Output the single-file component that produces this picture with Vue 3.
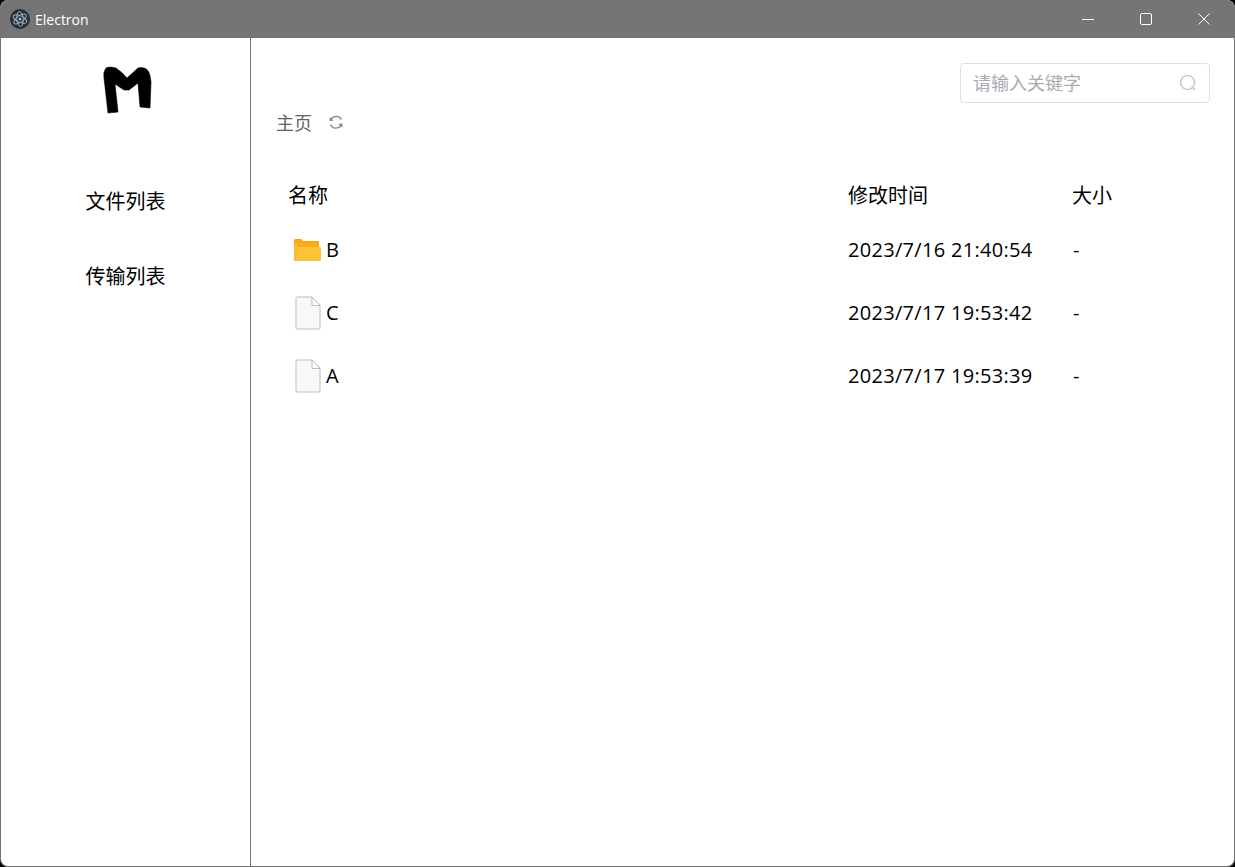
<template>
    <div class="window">
        <!-- title bar -->
        <header class="title-bar">
            <div class="title-left">
                <svg class="app-icon" width="20" height="20" viewBox="0 0 20 20">
                    <circle cx="10" cy="10" r="10" fill="#2b2e3b" />
                    <g fill="none" stroke="#9dbcc8" stroke-width="0.9">
                        <ellipse cx="10" cy="10" rx="7.400" ry="3.200" transform="rotate(25 10 10)" />
                        <ellipse cx="10" cy="10" rx="7.400" ry="3.200" transform="rotate(85 10 10)" />
                        <ellipse cx="10" cy="10" rx="7.400" ry="3.200" transform="rotate(145 10 10)" />
                    </g>
                    <circle cx="10" cy="10" r="1.200" fill="#c4d8df" />
                </svg>
                <span class="app-name">Electron</span>
            </div>
            <div class="win-controls">
                <button class="win-btn" type="button">
                    <svg width="12" height="12" viewBox="0 0 12 12"><path d="M0 6.500h12" stroke="#fff" fill="none" /></svg>
                </button>
                <button class="win-btn" type="button">
                    <svg width="12" height="12" viewBox="0 0 12 12"><rect x="0.5" y="0.5" width="11" height="11" rx="1.500" stroke="#fff" fill="none" /></svg>
                </button>
                <button class="win-btn" type="button">
                    <svg width="12" height="12" viewBox="0 0 12 12"><path d="M0.500 0.500l11 11M11.500 0.500l-11 11" stroke="#fff" fill="none" /></svg>
                </button>
            </div>
        </header>

        <div class="body">
            <!-- sidebar -->
            <aside class="sidebar">
                <svg class="logo" width="50" height="48" viewBox="0 0 50 48">
                    <path d="M6 47L16 46L13 18L22 24L27 24L36 17L38 41L48 42L49 16Q48 3 42 2Q38 1 36 2L25 12Q20 6 14 2Q7 0 4 2Q1 6 2 12Z" fill="#000" stroke="#000" stroke-width="0.6" stroke-linejoin="round" />
                </svg>
                <nav class="nav">
                    <a v-for="item in navItems" :key="item" class="nav-item">{{ item }}</a>
                </nav>
            </aside>

            <!-- main -->
            <main class="main">
                <div class="search-row">
                    <div class="search">
                        <span class="placeholder">请输入关键字</span>
                        <svg width="18" height="18" viewBox="0 0 18 18" fill="none" stroke="#b9bbc0" stroke-width="1.200">
                            <circle cx="8.500" cy="8.500" r="7" />
                            <path d="M13.500 13.500L16 16" />
                        </svg>
                    </div>
                </div>

                <div class="crumb">
                    <span>主页</span>
                    <svg width="16" height="16" viewBox="0 0 16 16">
                        <g fill="none" stroke="#8a8a8a" stroke-width="1.400">
                            <path d="M3 5.500A6 6 0 0 1 13.500 5.500" />
                            <path d="M2.500 10.500A6 6 0 0 0 13 11.500" />
                        </g>
                        <path d="M1.500 3L1.500 7.200L5.800 6.600Z" fill="#8a8a8a" />
                        <path d="M14.500 13.700L14.500 9.500L10.200 10.100Z" fill="#8a8a8a" />
                    </svg>
                </div>

                <div class="table">
                    <div class="row head">
                        <div class="name-head">名称</div>
                        <div>修改时间</div>
                        <div>大小</div>
                    </div>
                    <div v-for="file in files" :key="file.name" class="row">
                        <div class="name-cell">
                            <span class="file-icon">
                                <svg v-if="file.folder" width="28" height="24" viewBox="0 0 28 24">
                                    <path d="M1 2Q1 1 2 1H8.500L10 3H25Q26 3 26 4V9H1Z" fill="#f5a81f" />
                                    <path d="M1 5H26V9H4V23H2Q1 23 1 22Z" fill="#fbbb3a" />
                                    <path d="M1 5H26V9H4V5Z" fill="#f7ab20" />
                                    <path d="M4 9H27Q28 9 28 10V22Q28 23 27 23H4Z" fill="#ffc233" />
                                </svg>
                                <svg v-else class="doc" width="26" height="34" viewBox="0 0 26 34">
                                    <path d="M2 1H17L25 9.500V32Q25 33 24 33H2Q1 33 1 32V2Q1 1 2 1Z" fill="#f8f8f8" stroke="#bdbdbd" />
                                    <path d="M17 1V9.500H25Z" fill="#fff" stroke="#bdbdbd" />
                                </svg>
                            </span>
                            <span>{{ file.name }}</span>
                        </div>
                        <div class="time-cell">{{ file.time }}</div>
                        <div class="size-cell">{{ file.size }}</div>
                    </div>
                </div>
            </main>
        </div>
    </div>
</template>

<script setup>
const navItems = ['文件列表', '传输列表']

const files = [
    { name: 'B', time: '2023/7/16 21:40:54', size: '-', folder: true },
    { name: 'C', time: '2023/7/17 19:53:42', size: '-', folder: false },
    { name: 'A', time: '2023/7/17 19:53:39', size: '-', folder: false },
]
</script>

<style>
html,
body {
    margin: 0;
    background: #000;
}
</style>

<style scoped>
.window {
    box-sizing: border-box;
    width: 1235px;
    height: 867px;
    display: flex;
    flex-direction: column;
    overflow: hidden;
    background: #fff;
    border: 1px solid #757575;
    border-top: none;
    border-radius: 8px;
    color: #000;
    font-family: "Open Sans", "Noto Sans CJK SC", sans-serif;
}

/* title bar */
.title-bar {
    flex: none;
    height: 38px;
    margin: 0 -1px;
    display: flex;
    justify-content: space-between;
    background: #757575;
    color: #fff;
}

.title-left {
    display: flex;
    align-items: center;
    gap: 5px;
    padding-left: 10px;
}

.app-name {
    font-size: 14px;
}

.win-controls {
    display: flex;
    padding-right: 2px;
}

.win-btn {
    width: 58px;
    padding: 0;
    border: none;
    background: none;
    display: flex;
    align-items: center;
    justify-content: center;
}

.body {
    flex: 1;
    display: flex;
    min-height: 0;
}

/* sidebar */
.sidebar {
    flex: none;
    width: 249px;
    border-right: 1px solid #757575;
    display: flex;
    flex-direction: column;
    align-items: center;
}

.logo {
    margin: 28px 0 0 2px;
}

.nav {
    margin-top: 73px;
    display: flex;
    flex-direction: column;
    gap: 45px;
}

.nav-item {
    height: 30px;
    line-height: 30px;
    font-size: 20px;
}

/* main */
.main {
    flex: 1;
    min-width: 0;
    padding: 25px 24px 0 25px;
}

.search-row {
    display: flex;
    justify-content: flex-end;
}

.search {
    box-sizing: border-box;
    width: 250px;
    height: 40px;
    padding: 0 12px 0 12px;
    border: 1px solid #dcdfe6;
    border-radius: 4px;
    display: flex;
    align-items: center;
    justify-content: space-between;
}

.placeholder {
    margin-bottom: 2px;
    font-size: 18px;
    color: #a8abb2;
}

.crumb {
    margin-top: 5px;
    height: 28px;
    display: flex;
    align-items: center;
    gap: 16px;
    font-size: 18px;
    color: #606266;
}

.table {
    margin-top: 34px;
}

.row {
    display: grid;
    grid-template-columns: 572px 224px 1fr;
    height: 63px;
    align-items: center;
    font-size: 20px;
}

.row.head {
    height: 48px;
}

.name-head {
    padding-left: 12px;
}

.name-cell {
    display: flex;
    align-items: center;
    padding-left: 17px;
    gap: 5px;
}

.file-icon {
    width: 28px;
    display: flex;
    justify-content: center;
}

.doc {
    margin-left: 1px;
}

.time-cell {
    letter-spacing: 0.3px;
}

.size-cell {
    padding-left: 1px;
}
</style>
